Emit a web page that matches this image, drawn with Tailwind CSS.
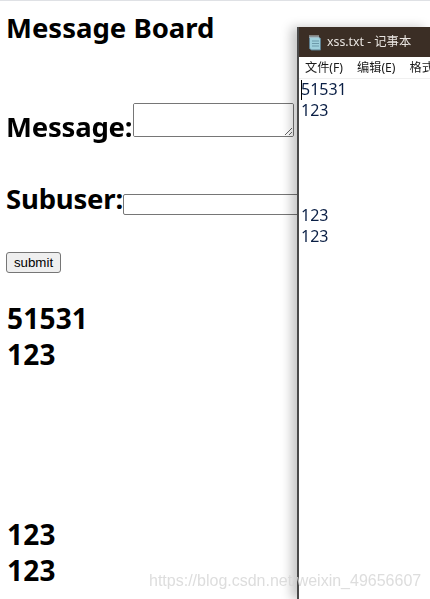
<!DOCTYPE html>
<html lang="en">

<head>
    <meta charset="UTF-8" />
    <title>Message Board</title>
    <script src="https://cdn.jsdelivr.net/npm/@tailwindcss/browser@4"></script>
</head>

<body class="relative h-[599px] overflow-hidden bg-white text-black font-['Noto_Sans',sans-serif]">
    <div class="h-px bg-[#dfe1e5]"></div>

    <!-- Page -->
    <div class="pl-[6px]">
        <h1 class="text-[27.5px] leading-[38px] font-bold mt-[8px]">Message Board</h1>

        <form class="font-bold text-[27.5px] leading-[38px] tracking-[-0.2px]">
            <div class="flex items-end mt-[57px] h-[40px]">
                <span class="translate-y-[2px]">Message:</span>
                <textarea class="block ml-px w-[161px] h-[34px] mb-[7px] border border-[#767676] rounded-[2px] bg-white"></textarea>
            </div>
            <div class="flex items-end mt-[34px] h-[40px]">
                <span>Subuser:</span>
                <input type="text" class="block w-[190px] h-[21px] mb-[3px] border border-[#767676] rounded-[2px] bg-white" />
            </div>
            <button type="button" class="block mt-[34px] w-[55px] h-[21px] bg-[#efefef] border border-[#767676] rounded-[3px] font-['Liberation_Sans',sans-serif] font-normal tracking-normal text-[13.3px] leading-[19px]">submit</button>
        </form>

        <div class="mt-[27px] font-bold text-[28px] leading-[36px] tracking-[0.2px] pl-px">
            <div>51531</div>
            <div>123</div>
            <div class="h-[144px]"></div>
            <div>123</div>
            <div>123</div>
        </div>
    </div>

    <!-- Notepad window on top of the page -->
    <div class="absolute left-[297px] top-[27px] w-[133px] h-[572px] bg-white border-l-2 border-[#4a4a4a] shadow-[-6px_0_10px_rgba(0,0,0,0.22)]">
        <div class="flex items-center h-[30px] bg-[#3b2e25] text-[#e8e4e0] text-[12.300px] pl-[8px] gap-[4px] font-['Noto_Sans','Noto_Sans_CJK_SC',sans-serif] whitespace-nowrap">
            <svg width="16" height="17" viewBox="0 0 16 17" class="shrink-0">
                <path d="M2.500 3h9l2 1.500v11.500h-9l-2-1.500z" fill="#9fd0dc" stroke="#5d7f90" />
                <path d="M5 7h7M5 9.500h7M5 12h7" stroke="#6d9aaa" stroke-width="1" />
                <path d="M3 1v3M5 1v3M7 1v3M9 1v3M11 1v3" stroke="#c9d3d8" stroke-width="1" />
            </svg>
            <span>xss.txt - 记事本</span>
        </div>
        <div class="flex h-[22px] items-center gap-[14px] pl-[6px] pt-[2px] text-[12.200px] text-[#1a1a1a] border-b border-[#f0f0f0] font-['Noto_Sans','Noto_Sans_CJK_SC',sans-serif] whitespace-nowrap">
            <span>文件(F)</span>
            <span>编辑(E)</span>
            <span>格式</span>
        </div>
        <div class="relative pl-[2px] text-[16px] leading-[21px] text-[#0a1f45] font-['Noto_Sans',sans-serif]">
            <div class="absolute left-[2px] top-[1px] w-px h-[20px] bg-black"></div>
            <div>51531</div>
            <div>123</div>
            <div class="h-[84px]"></div>
            <div>123</div>
            <div>123</div>
        </div>
    </div>

    <!-- Watermark -->
    <div class="absolute left-[149px] top-[572px] text-[16px] leading-[18px] text-[#d4d4d4]/80 font-['Liberation_Sans',sans-serif] whitespace-nowrap">https://blog.csdn.net/weixin_49656607</div>
</body>

</html>
